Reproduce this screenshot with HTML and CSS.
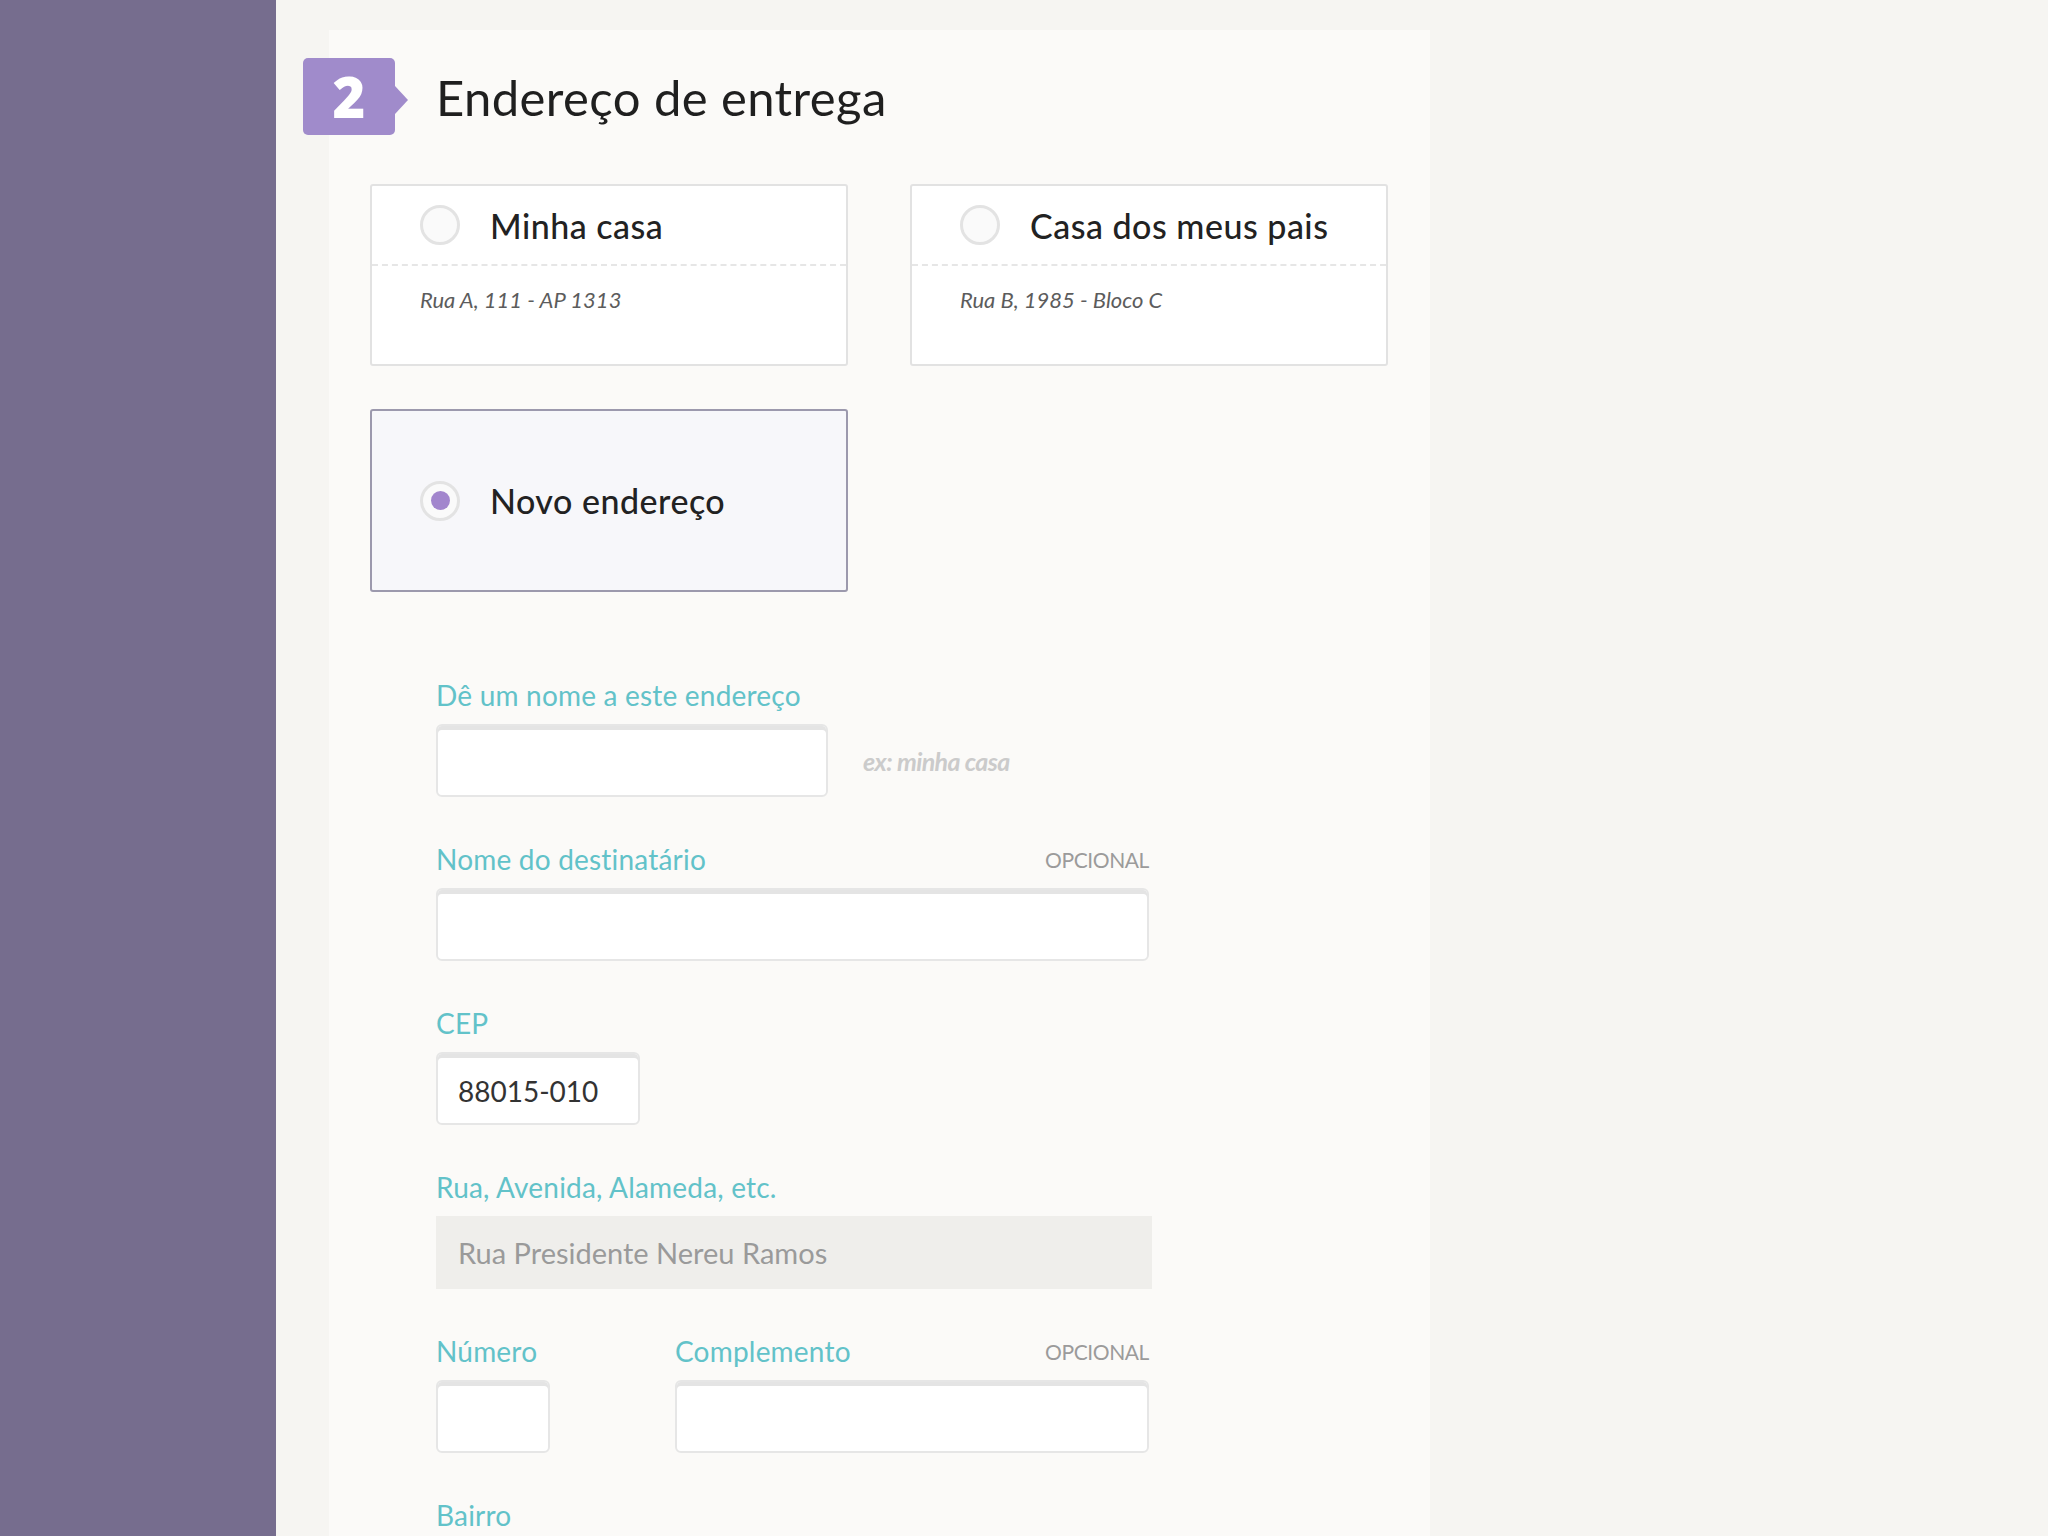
FILE: index.html
```html
<!DOCTYPE html>
<html lang="pt-BR">
<head>
<meta charset="utf-8">
<title>Endereço de entrega</title>
<link rel="stylesheet" href="styles.css">
</head>
<body>
<div class="layout">
  <aside class="sidebar"></aside>
  <main class="main">
    <section class="panel">
      <header class="step-header">
        <div class="step-badge">2</div>
        <h1 class="step-title">Endereço de entrega</h1>
      </header>

      <div class="address-grid">
        <div class="address-card">
          <div class="card-head">
            <span class="radio"></span>
            <span class="card-name">Minha casa</span>
          </div>
          <div class="card-body">Rua A, 111 - AP 1313</div>
        </div>
        <div class="address-card">
          <div class="card-head">
            <span class="radio"></span>
            <span class="card-name">Casa dos meus pais</span>
          </div>
          <div class="card-body">Rua B, 1985 - Bloco C</div>
        </div>
        <div class="address-card new selected">
          <div class="card-head">
            <span class="radio checked"></span>
            <span class="card-name">Novo endereço</span>
          </div>
        </div>
      </div>

      <form class="form">
        <div class="field">
          <div class="label-row"><label class="label">Dê um nome a este endereço</label></div>
          <div class="input-row">
            <input class="input w-name" type="text">
            <span class="hint">ex: minha casa</span>
          </div>
        </div>

        <div class="field w-full">
          <div class="label-row"><label class="label">Nome do destinatário</label><span class="optional">OPCIONAL</span></div>
          <input class="input w-full" type="text">
        </div>

        <div class="field">
          <div class="label-row"><label class="label">CEP</label></div>
          <input class="input w-cep" type="text" value="88015-010">
        </div>

        <div class="field">
          <div class="label-row"><label class="label">Rua, Avenida, Alameda, etc.</label></div>
          <input class="input disabled w-street" type="text" value="Rua Presidente Nereu Ramos" disabled>
        </div>

        <div class="field-row">
          <div class="field w-num">
            <div class="label-row"><label class="label">Número</label></div>
            <input class="input w-num" type="text">
          </div>
          <div class="field w-comp">
            <div class="label-row"><label class="label">Complemento</label><span class="optional">OPCIONAL</span></div>
            <input class="input w-comp" type="text">
          </div>
        </div>

        <div class="field">
          <div class="label-row"><label class="label">Bairro</label></div>
        </div>
      </form>
    </section>
  </main>
</div>
</body>
</html>
```
FILE: styles.css
```css
* { box-sizing: border-box; }

html, body {
  margin: 0;
  padding: 0;
  height: 100%;
  overflow: hidden;
}

body {
  font-family: Lato, "Open Sans", "Liberation Sans", sans-serif;
  background: #f6f5f2;
  color: #2b2b2b;
}

.layout {
  display: flex;
  min-height: 1536px;
}

.sidebar {
  width: 276px;
  flex: 0 0 276px;
  background: #766d8e;
}

.main {
  flex: 1;
  background: #f6f5f2;
  padding: 30px 0 0 53px;
}

.panel {
  width: 1101px;
  min-height: 1506px;
  background: #fbfaf8;
  padding: 28px 0 0 0;
}

/* header */
.step-header {
  display: flex;
  align-items: center;
  margin-left: -26px;
  height: 77px;
}

.step-badge {
  position: relative;
  width: 92px;
  height: 77px;
  background: #a08bcb;
  border-radius: 5px;
  color: #fff;
  font-family: "Open Sans", Lato, sans-serif;
  font-weight: 800;
  font-size: 56px;
  line-height: 77px;
  text-align: center;
}

.step-badge::after {
  content: "";
  position: absolute;
  right: -13px;
  top: 28px;
  border-top: 14px solid transparent;
  border-bottom: 14px solid transparent;
  border-left: 13px solid #a08bcb;
}

.step-title {
  margin: 0 0 0 41px;
  font-weight: 400;
  font-size: 49px;
  color: #1f1f1f;
  letter-spacing: 0.4px;
}

/* address cards */
.address-grid {
  display: grid;
  grid-template-columns: 478px 478px;
  column-gap: 62px;
  row-gap: 43px;
  margin: 49px 0 0 41px;
}

.address-card {
  height: 182px;
  background: #fff;
  border: 2px solid #e2e2e2;
  border-radius: 3px;
}

.address-card.selected {
  height: 183px;
  background: #f7f7fa;
  border-color: #9c99ad;
  display: flex;
  align-items: center;
}

.card-head {
  display: flex;
  align-items: center;
  height: 80px;
  padding: 0 0 0 48px;
  border-bottom: 2px dashed #e6e6e6;
}

.address-card.selected .card-head {
  border-bottom: none;
}

.radio {
  width: 40px;
  height: 40px;
  border-radius: 50%;
  border: 3px solid #e3e3e3;
  background: #fafafa;
  flex: 0 0 40px;
  display: flex;
  align-items: center;
  justify-content: center;
}

.radio.checked::before {
  content: "";
  width: 19px;
  height: 19px;
  border-radius: 50%;
  background: #a286cd;
}

.card-name {
  margin-left: 30px;
  font-size: 34px;
  font-weight: 500;
  color: #222;
  letter-spacing: 0.5px;
}

.card-body {
  padding: 20px 0 0 48px;
  font-size: 22px;
  font-style: italic;
  color: #5c5c5c;
}

/* form */
.form {
  margin: 86px 0 0 107px;
}

.field {
  margin-bottom: 45px;
}

.label-row {
  display: flex;
  justify-content: space-between;
  align-items: center;
  height: 34px;
  margin-bottom: 12px;
}

.label {
  font-size: 28px;
  color: #62c2c9;
  letter-spacing: 0.2px;
}

.optional {
  font-size: 21px;
  color: #9b9b9b;
  letter-spacing: -0.4px;
}

.input-row {
  display: flex;
  align-items: center;
}

.input {
  display: block;
  height: 73px;
  border: 2px solid #e6e6e6;
  border-radius: 6px;
  box-shadow: inset 0 4px 0 #e4e4e4;
  background: #fff;
  font-family: Lato, "Open Sans", sans-serif;
  font-size: 28px;
  color: #333;
  padding: 4px 20px 0 20px;
  outline: none;
}

.input.disabled {
  border: none;
  box-shadow: none;
  border-radius: 0;
  background: #efeeeb;
  color: #9a9a9a;
  font-size: 29px;
  padding: 0 22px;
}

.w-name { width: 392px; }
.w-full { width: 713px; }
.w-cep { width: 204px; }
.w-street { width: 716px; }
.w-num { width: 114px; }
.w-comp { width: 474px; }

.hint {
  margin-left: 35px;
  font-size: 25px;
  font-style: italic;
  font-weight: 700;
  color: #cbcbcb;
  letter-spacing: -0.6px;
}

.field-row {
  display: flex;
  gap: 125px;
}
```
